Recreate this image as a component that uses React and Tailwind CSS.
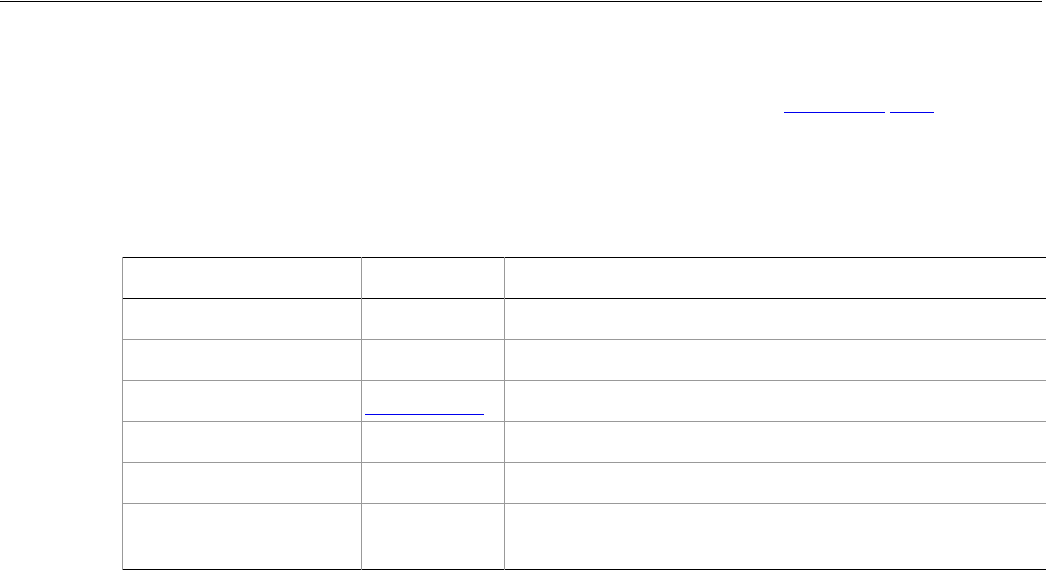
import React from 'react';

const rows = [
  { name: 'id', type: 'string', desc: 'Unique identifier of the entry.' },
  { name: 'label', type: 'string', desc: 'Human readable name shown in the list.' },
  { name: 'source', type: 'link', desc: 'Reference to the original document.' },
  { name: 'created', type: 'date', desc: 'Time at which the entry was created.' },
  { name: 'updated', type: 'date', desc: 'Time at which the entry was last changed.' },
  { name: 'notes', type: 'text', desc: 'Free form remarks about the entry, kept as plain text and shown below the record.' },
];

function LinkLine({ children, width }) {
  // text is not drawn in the picture, only the underline is
  return (
    <span className={`inline-flex flex-col ${width}`}>
      <span className="h-[18px] whitespace-nowrap leading-[18px] text-transparent">{children}</span>
      <span className="h-px w-full bg-[#0000ee]" />
    </span>
  );
}

export default function App() {
  return (
    <div className="min-h-[570px] w-[1046px] overflow-hidden bg-white font-['Liberation_Sans',Arial,sans-serif] text-[16px] text-transparent">
      <div className="pt-px">
        <div className="h-px w-[1042px] bg-black" />
      </div>

      <div className="mt-[92px] flex pl-[784px]">
        <LinkLine width="w-[101px]">Reference</LinkLine>
        <span className="w-[5px] text-[4px]">,</span>
        <LinkLine width="w-[44px]">Help</LinkLine>
      </div>

      <div className="mt-[144px] pl-[122px]">
        <table className="w-[924px] table-fixed border-collapse">
          <colgroup>
            <col className="w-[239px]" />
            <col className="w-[143px]" />
            <col className="w-[542px]" />
          </colgroup>
          <thead>
            <tr className="h-[41px] border-y border-black">
              <th className="border-x border-[#999] px-[3px] text-left font-normal">Field</th>
              <th className="border-x border-[#999] px-[3px] text-left font-normal">Type</th>
              <th className="border-x border-[#999] px-[3px] text-left font-normal">Description</th>
            </tr>
          </thead>
          <tbody>
            {rows.map((r, i) => (
              <tr
                key={r.name}
                className={
                  i === rows.length - 1
                    ? 'h-[66px] border-b border-black'
                    : 'h-[41px] border-b border-[#999]'
                }
              >
                <td className="border-x border-[#999] px-[3px] align-middle">{r.name}</td>
                <td className="border-x border-[#999] px-[3px] align-middle">
                  {r.type === 'link' ? (
                    <div className="mt-[8px]">
                      <LinkLine width="w-[119px]">reference</LinkLine>
                    </div>
                  ) : (
                    r.type
                  )}
                </td>
                <td className="border-x border-[#999] px-[3px] align-middle">{r.desc}</td>
              </tr>
            ))}
          </tbody>
        </table>
      </div>
    </div>
  );
}
